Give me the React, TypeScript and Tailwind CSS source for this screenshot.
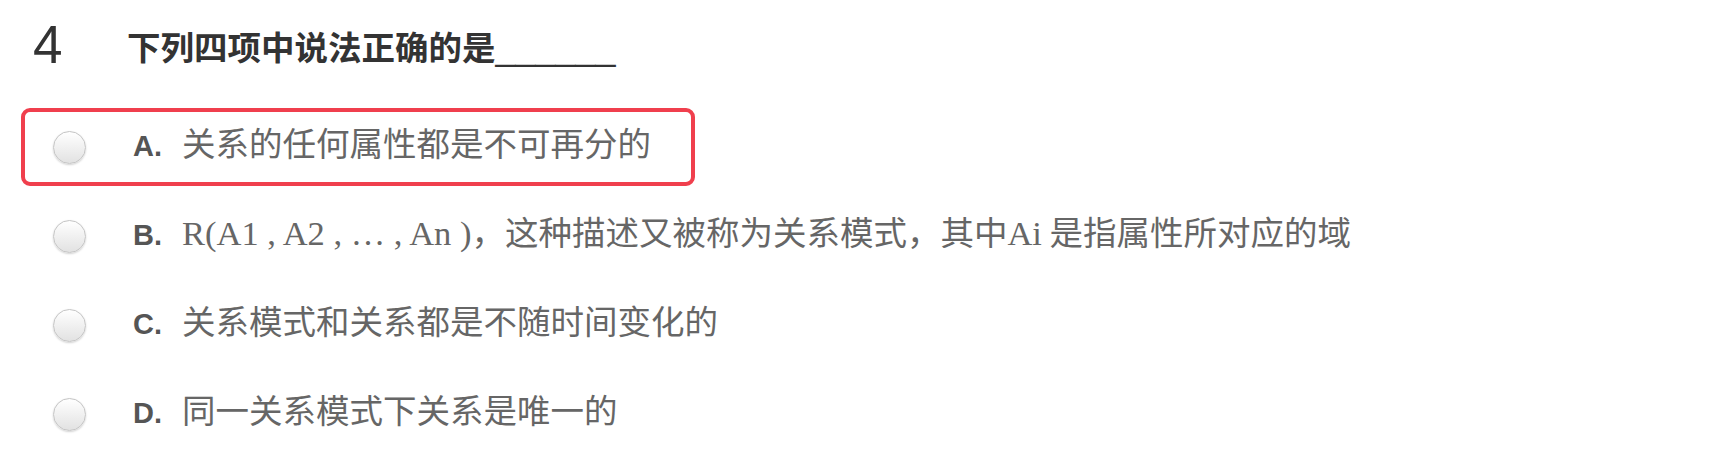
import React from 'react';

interface Option {
    key: string;
    content: React.ReactNode;
}

const serif = "font-['Liberation_Serif','Times_New_Roman',serif] text-[34.5px]";

const options: Option[] = [
    { key: 'A', content: <>关系的任何属性都是不可再分的</> },
    {
        key: 'B',
        content: (
            <>
                <span className={serif}>R(A1 , A2 , … , An )</span>，这种描述又被称为关系模式，其中<span className={serif}>Ai</span> 是指属性所对应的域
            </>
        ),
    },
    { key: 'C', content: <>关系模式和关系都是不随时间变化的</> },
    { key: 'D', content: <>同一关系模式下关系是唯一的</> },
];

function Radio() {
    return (
        <span className="w-[33px] h-[33px] rounded-full border border-[#c4c4c4] bg-linear-to-b from-white to-[#e2e2e2] shadow-[0_1px_2px_rgba(0,0,0,0.18)] flex-shrink-0" />
    );
}

export default function App() {
    const selected = 'A';

    return (
        <div className="w-[1716px] h-[470px] bg-white pl-[21px] font-['Noto_Sans_CJK_SC',sans-serif]">
            {/* Question title */}
            <div className="flex items-center h-[108px] pb-[20px]">
                <span className="w-[106px] pl-[12px] text-[53px] font-normal text-[#333] font-['Liberation_Sans',Arial,sans-serif] leading-none">
                    4
                </span>
                <h2 className="mt-[6px] text-[33.5px] font-bold text-[#333] leading-none">
                    下列四项中说法正确的是
                    <span className="font-['Liberation_Sans',Arial,sans-serif] font-normal text-[36px]">______</span>
                </h2>
            </div>

            {/* Options */}
            <div className="flex flex-col gap-[11px]">
                {options.map((opt) => (
                    <div
                        key={opt.key}
                        className={`flex items-center h-[78px] pl-[28px] border-4 rounded-[9px] ${opt.key === selected ? 'w-[674px] border-[#f03f4d]' : 'border-transparent'
                            }`}
                    >
                        <Radio />
                        <div className="ml-[47px] flex items-baseline">
                            <span className="w-[49px] text-[29px] font-bold text-[#555] font-['Liberation_Sans',Arial,sans-serif]">
                                {opt.key}.
                            </span>
                            <span className="text-[33.5px] text-[#666] leading-none whitespace-nowrap">{opt.content}</span>
                        </div>
                    </div>
                ))}
            </div>
        </div>
    );
}
